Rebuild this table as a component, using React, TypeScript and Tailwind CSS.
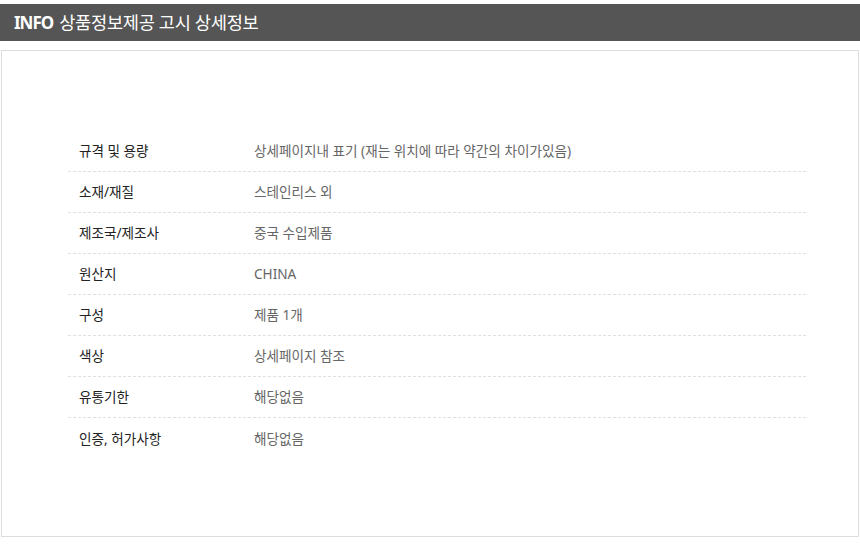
import React from "react";

const rows: { label: string; value: string }[] = [
  { label: "규격 및 용량", value: "상세페이지내 표기 (재는 위치에 따라 약간의 차이가있음)" },
  { label: "소재/재질", value: "스테인리스 외" },
  { label: "제조국/제조사", value: "중국 수입제품" },
  { label: "원산지", value: "CHINA" },
  { label: "구성", value: "제품 1개" },
  { label: "색상", value: "상세페이지 참조" },
  { label: "유통기한", value: "해당없음" },
  { label: "인증, 허가사항", value: "해당없음" },
];

const App: React.FC = () => {
  return (
    <div
      className="w-[860px] h-[552px] bg-white pt-[4px]"
      style={{ fontFamily: '"Noto Sans", "Noto Sans CJK KR", sans-serif' }}
    >
      {/* Title bar */}
      <div className="h-[37px] bg-[#555555] flex items-center px-[14px] text-white">
        <span className="text-[17px] font-bold tracking-[-1px] mr-[6px]">INFO</span>
        <span className="text-[17.6px] tracking-[-0.3px]">상품정보제공 고시 상세정보</span>
      </div>

      {/* Detail box */}
      <div className="mt-[9px] ml-[1px] w-[858px] h-[487px] border border-[#dddddd] pt-[80px]">
        <div className="ml-[66px] w-[738px]">
          {rows.map((row, i) => (
            <div
              key={row.label}
              className={
                "h-[41px] flex items-center pl-[11px] pt-[1px] text-[13.6px] " +
                (i < rows.length - 1 ? "border-b border-dashed border-[#e0e0e0]" : "")
              }
            >
              <div className="w-[175px] text-[#222222]">{row.label}</div>
              <div className="text-[#666666]">{row.value}</div>
            </div>
          ))}
        </div>
      </div>
    </div>
  );
};

export default App;
